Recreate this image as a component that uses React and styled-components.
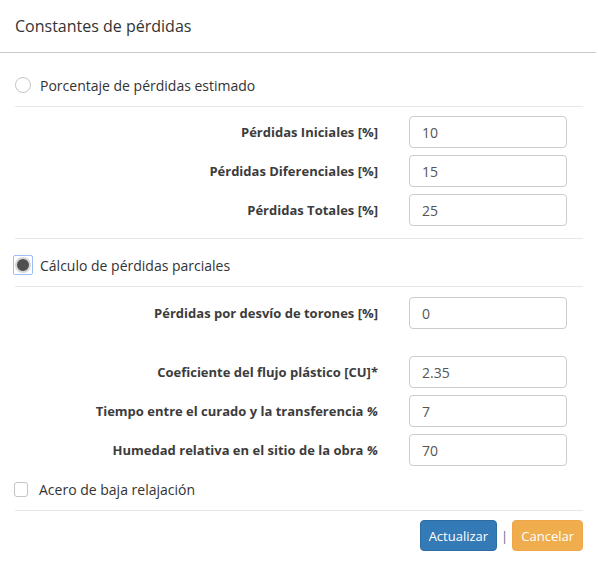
import React from "react";
import styled, { createGlobalStyle } from "styled-components";

const GlobalStyle = createGlobalStyle`
    html, body {
        margin: 0;
        padding: 0;
        background: #ffffff;
    }

    body {
        font-family: "Open Sans", "Liberation Sans", sans-serif;
        font-size: 14px;
        color: #333333;
    }
`

const Modal = styled.div`
    width: 598px;
    height: 571px;
    background: #ffffff;
    box-sizing: border-box;
`

const Header = styled.div`
    padding: 15px 15px 15px;
    border-bottom: 1px solid #c8c8c8;
    margin-right: 2px;

    h4 {
        margin: 0;
        font-size: 16px;
        line-height: 22px;
        font-weight: 400;
        color: #333333;
    }
`

const Body = styled.div`
    padding: 0 15px;
`

const OptionRow = styled.label`
    display: flex;
    align-items: center;
    gap: 9px;
    height: 20px;
    margin-top: ${props => props.top || 0}px;
    padding-bottom: 11px;
    border-bottom: 1px solid #e8e8e8;
    color: #333333;
    font-size: 14px;
`

const Radio = styled.span`
    width: 16px;
    height: 16px;
    box-sizing: border-box;
    border-radius: 50%;
    border: ${props => (props.checked ? "2px solid #d6d6d6" : "1px solid #c4c4c4")};
    background: ${props => (props.checked ? "#505050" : "#ffffff")};
    flex-shrink: 0;
    position: relative;

    &::after {
        content: "";
        display: ${props => (props.checked ? "block" : "none")};
        position: absolute;
        inset: -4px;
        border: 1.5px solid #9dbff3;
        border-radius: 2px;
    }
`

const Checkbox = styled.span`
    width: 14px;
    height: 15px;
    box-sizing: border-box;
    border: 1px solid #c4c4c4;
    border-radius: 3px;
    background: #ffffff;
    flex-shrink: 0;
    margin-left: -1px;
    margin-right: 2px;
`

const Fields = styled.div`
    display: flex;
    flex-direction: column;
    gap: 7px;
    padding: ${props => props.pad || "9px 0 12px"};
    border-bottom: ${props => (props.noLine ? "0" : "1px solid #e8e8e8")};
`

const FieldRow = styled.div`
    display: grid;
    grid-template-columns: 1fr 158px;
    column-gap: 31px;
    align-items: center;
    padding-right: 16px;
    margin-top: ${props => props.top || 0}px;

    label {
        text-align: right;
        font-weight: 700;
        color: #3c3c3c;
        font-size: 13px;
        white-space: nowrap;
    }

    em {
        font-style: italic;
    }
`

const Input = styled.input`
    height: 32px;
    width: 158px;
    box-sizing: border-box;
    border: 1px solid #cccccc;
    border-radius: 4px;
    padding: 0 12px;
    font-family: "Open Sans", "Liberation Sans", sans-serif;
    font-size: 14px;
    color: #555555;
    background: #ffffff;
    outline: none;
`

const Footer = styled.div`
    display: flex;
    justify-content: flex-end;
    align-items: center;
    gap: 4px;
    padding-top: 9px;
`

const Button = styled.button`
    height: 31px;
    padding: 0 8px;
    border: 1px solid ${props => (props.variant === "primary" ? "#2e6da4" : "#f0a54a")};
    border-radius: 4px;
    background: ${props => (props.variant === "primary" ? "#337ab7" : "#f0ad4e")};
    color: #ffffff;
    font-family: "Open Sans", "Liberation Sans", sans-serif;
    font-size: 13px;
`

const Divider = styled.span`
    color: #6a6a8a;
    font-size: 13px;
`

const partialFields = [
    { label: "Coeficiente del flujo plástico [CU]*", value: "2.35" },
    { label: <>Tiempo entre el curado y la transferencia <em>%</em></>, value: "7" },
    { label: <>Humedad relativa en el sitio de la obra <em>%</em></>, value: "70" }
];

export default function App() {
    return (
        <Modal>
            <GlobalStyle />
            <Header>
                <h4>Constantes de pérdidas</h4>
            </Header>
            <Body>
                <OptionRow top={22}>
                    <Radio />
                    Porcentaje de pérdidas estimado
                </OptionRow>
                <Fields>
                    <FieldRow>
                        <label>Pérdidas Iniciales [%]</label>
                        <Input defaultValue="10" />
                    </FieldRow>
                    <FieldRow>
                        <label>Pérdidas Diferenciales [%]</label>
                        <Input defaultValue="15" />
                    </FieldRow>
                    <FieldRow>
                        <label>Pérdidas Totales [%]</label>
                        <Input defaultValue="25" />
                    </FieldRow>
                </Fields>
                <OptionRow top={16}>
                    <Radio checked />
                    Cálculo de pérdidas parciales
                </OptionRow>
                <Fields noLine pad="10px 0 13px">
                    <FieldRow>
                        <label>Pérdidas por desvío de torones [%]</label>
                        <Input defaultValue="0" />
                    </FieldRow>
                    <FieldRow top={20}>
                        <label>{partialFields[0].label}</label>
                        <Input defaultValue={partialFields[0].value} />
                    </FieldRow>
                    {partialFields.slice(1).map((f, i) => (
                        <FieldRow key={i}>
                            <label>{f.label}</label>
                            <Input defaultValue={f.value} />
                        </FieldRow>
                    ))}
                </Fields>
                <OptionRow>
                    <Checkbox />
                    Acero de baja relajación
                </OptionRow>
                <Footer>
                    <Button variant="primary">Actualizar</Button>
                    <Divider>|</Divider>
                    <Button variant="warning">Cancelar</Button>
                </Footer>
            </Body>
        </Modal>
    )
}
